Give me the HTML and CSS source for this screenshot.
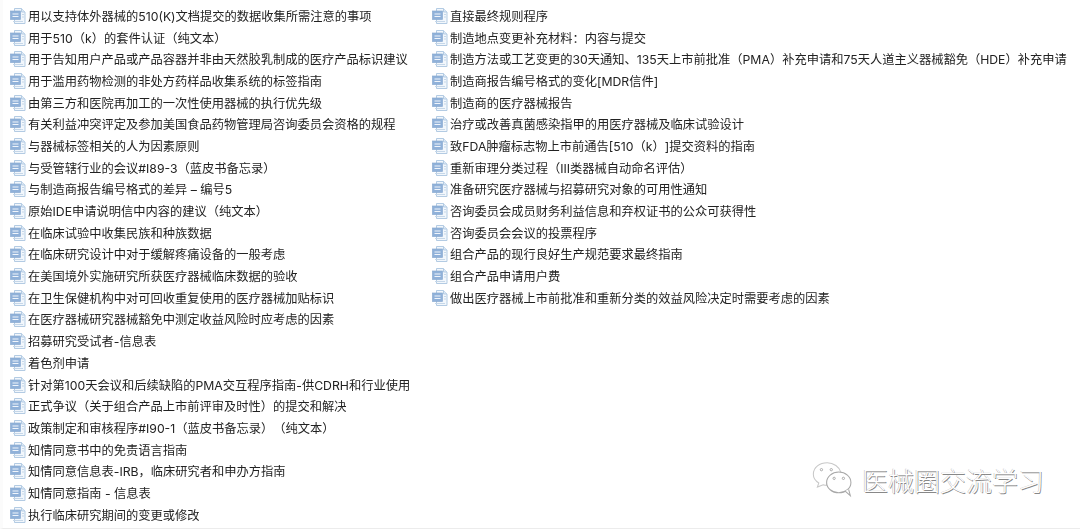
FILE: index.html
```html
<!DOCTYPE html>
<html lang="zh-CN">
<head>
<meta charset="utf-8">
<title>FDA</title>
<link rel="stylesheet" href="styles.css">
</head>
<body>
<svg class="defs" width="0" height="0" aria-hidden="true">
  <symbol id="doc" viewBox="0 0 16 16">
    <path d="M4.5 .5H11.5L15 4V15.5H4.5Z" fill="#f2f7fc" stroke="#b3cbe3"/>
    <path d="M11.5 .5V4H15" fill="#dde9f5" stroke="#b3cbe3"/>
    <rect x=".5" y="3" width="10" height="8.5" fill="#90b1d9" stroke="#8aabd2" stroke-width=".7"/>
    <path d="M2.5 6H8.5M2.5 8.5H8.5" stroke="#f0f5fb" stroke-width="1.1"/>
    <path d="M3 13.5H13M12 6.5H14M12 9H14" stroke="#c6d7e8"/>
  </symbol>
</svg>
<main class="page">
  <ul class="col col-left">
    <li class="item"><svg class="ic"><use href="#doc"/></svg><span>用以支持体外器械的510(K)文档提交的数据收集所需注意的事项</span></li>
    <li class="item"><svg class="ic"><use href="#doc"/></svg><span>用于510（k）的套件认证（纯文本）</span></li>
    <li class="item"><svg class="ic"><use href="#doc"/></svg><span>用于告知用户产品或产品容器并非由天然胶乳制成的医疗产品标识建议</span></li>
    <li class="item"><svg class="ic"><use href="#doc"/></svg><span>用于滥用药物检测的非处方药样品收集系统的标签指南</span></li>
    <li class="item"><svg class="ic"><use href="#doc"/></svg><span>由第三方和医院再加工的一次性使用器械的执行优先级</span></li>
    <li class="item"><svg class="ic"><use href="#doc"/></svg><span>有关利益冲突评定及参加美国食品药物管理局咨询委员会资格的规程</span></li>
    <li class="item"><svg class="ic"><use href="#doc"/></svg><span>与器械标签相关的人为因素原则</span></li>
    <li class="item"><svg class="ic"><use href="#doc"/></svg><span>与受管辖行业的会议#I89-3（蓝皮书备忘录）</span></li>
    <li class="item"><svg class="ic"><use href="#doc"/></svg><span>与制造商报告编号格式的差异 – 编号5</span></li>
    <li class="item"><svg class="ic"><use href="#doc"/></svg><span>原始IDE申请说明信中内容的建议（纯文本）</span></li>
    <li class="item"><svg class="ic"><use href="#doc"/></svg><span>在临床试验中收集民族和种族数据</span></li>
    <li class="item"><svg class="ic"><use href="#doc"/></svg><span>在临床研究设计中对于缓解疼痛设备的一般考虑</span></li>
    <li class="item"><svg class="ic"><use href="#doc"/></svg><span>在美国境外实施研究所获医疗器械临床数据的验收</span></li>
    <li class="item"><svg class="ic"><use href="#doc"/></svg><span>在卫生保健机构中对可回收重复使用的医疗器械加贴标识</span></li>
    <li class="item"><svg class="ic"><use href="#doc"/></svg><span>在医疗器械研究器械豁免中测定收益风险时应考虑的因素</span></li>
    <li class="item"><svg class="ic"><use href="#doc"/></svg><span>招募研究受试者-信息表</span></li>
    <li class="item"><svg class="ic"><use href="#doc"/></svg><span>着色剂申请</span></li>
    <li class="item"><svg class="ic"><use href="#doc"/></svg><span>针对第100天会议和后续缺陷的PMA交互程序指南-供CDRH和行业使用</span></li>
    <li class="item"><svg class="ic"><use href="#doc"/></svg><span>正式争议（关于组合产品上市前评审及时性）的提交和解决</span></li>
    <li class="item"><svg class="ic"><use href="#doc"/></svg><span>政策制定和审核程序#I90-1（蓝皮书备忘录）（纯文本）</span></li>
    <li class="item"><svg class="ic"><use href="#doc"/></svg><span>知情同意书中的免责语言指南</span></li>
    <li class="item"><svg class="ic"><use href="#doc"/></svg><span>知情同意信息表-IRB，临床研究者和申办方指南</span></li>
    <li class="item"><svg class="ic"><use href="#doc"/></svg><span>知情同意指南 - 信息表</span></li>
    <li class="item"><svg class="ic"><use href="#doc"/></svg><span>执行临床研究期间的变更或修改</span></li>
  </ul>
  <ul class="col col-right">
    <li class="item"><svg class="ic"><use href="#doc"/></svg><span>直接最终规则程序</span></li>
    <li class="item"><svg class="ic"><use href="#doc"/></svg><span>制造地点变更补充材料：内容与提交</span></li>
    <li class="item"><svg class="ic"><use href="#doc"/></svg><span>制造方法或工艺变更的30天通知、135天上市前批准（PMA）补充申请和75天人道主义器械豁免（HDE）补充申请</span></li>
    <li class="item"><svg class="ic"><use href="#doc"/></svg><span>制造商报告编号格式的变化[MDR信件]</span></li>
    <li class="item"><svg class="ic"><use href="#doc"/></svg><span>制造商的医疗器械报告</span></li>
    <li class="item"><svg class="ic"><use href="#doc"/></svg><span>治疗或改善真菌感染指甲的用医疗器械及临床试验设计</span></li>
    <li class="item"><svg class="ic"><use href="#doc"/></svg><span>致FDA肿瘤标志物上市前通告[510（k）]提交资料的指南</span></li>
    <li class="item"><svg class="ic"><use href="#doc"/></svg><span>重新审理分类过程（III类器械自动命名评估）</span></li>
    <li class="item"><svg class="ic"><use href="#doc"/></svg><span>准备研究医疗器械与招募研究对象的可用性通知</span></li>
    <li class="item"><svg class="ic"><use href="#doc"/></svg><span>咨询委员会成员财务利益信息和弃权证书的公众可获得性</span></li>
    <li class="item"><svg class="ic"><use href="#doc"/></svg><span>咨询委员会会议的投票程序</span></li>
    <li class="item"><svg class="ic"><use href="#doc"/></svg><span>组合产品的现行良好生产规范要求最终指南</span></li>
    <li class="item"><svg class="ic"><use href="#doc"/></svg><span>组合产品申请用户费</span></li>
    <li class="item"><svg class="ic"><use href="#doc"/></svg><span>做出医疗器械上市前批准和重新分类的效益风险决定时需要考虑的因素</span></li>
  </ul>
  <div class="mark">
    <svg class="wechat" viewBox="0 0 36 32" aria-hidden="true">
      <path d="M13 1.5C6.5 1.5 1 5.5 1 11.5C1 14.8 3 17.4 5.7 19L4.5 22.5L9.5 20.5C10.5 20.8 11.5 21 12.5 21C12 14 17 10 25 10C23.5 5 18.5 1.5 13 1.5Z" fill="#fff" stroke="#c8c8c8" stroke-width=".9"/>
      <ellipse cx="23" cy="18.5" rx="10.5" ry="9" fill="#fff" stroke="#a8a8a8" stroke-width=".9"/>
      <path d="M28.5 26L33 30L31.5 24.5" fill="#fff" stroke="#a8a8a8" stroke-width=".9"/>
      <circle cx="8" cy="7.5" r="1" fill="none" stroke="#a5a5a5" stroke-width=".8"/><circle cx="16.5" cy="7.5" r="1" fill="none" stroke="#a5a5a5" stroke-width=".8"/>
      <circle cx="19" cy="15" r="1" fill="none" stroke="#a5a5a5" stroke-width=".8"/><circle cx="27" cy="15" r="1" fill="none" stroke="#a5a5a5" stroke-width=".8"/>
    </svg>
    <span class="mark-text">医械圈交流学习</span>
  </div>
</main>
</body>
</html>
```
FILE: styles.css
```css
* { box-sizing: border-box; }
html, body { margin: 0; padding: 0; background: #fff; }
.defs { position: absolute; }
.page {
  position: relative;
  width: 1080px;
  height: 529px;
  overflow: hidden;
  display: flex;
  padding: 5px 0 0 7px;
  border-left: 3px solid #fbfbfb;
  border-bottom: 1px solid #ececec;
  font-family: Inter, "Noto Sans CJK SC", sans-serif;
  font-size: 12.25px;
  color: #222;
  text-spacing-trim: space-all;
}
.page::after {
  content: "";
  position: absolute;
  left: 939px;
  bottom: -1px;
  width: 78px;
  height: 1px;
  background: #d8d8d8;
}
.col { list-style: none; margin: 0; padding: 0; display: flex; flex-direction: column; flex: none; }
.col-left { width: 422px; }
.item { height: 21.7px; display: flex; align-items: center; gap: 2px; white-space: nowrap; filter: blur(.3px); }
.ic { width: 16px; height: 16px; flex: none; }
.mark {
  position: absolute;
  left: 809px;
  top: 461px;
  display: flex;
  align-items: center;
  gap: 8px;
}
.wechat { width: 42px; height: 37px; }
.mark-text {
  font-family: "Noto Sans CJK SC", sans-serif;
  font-size: 26px;
  font-weight: 300;
  line-height: 1;
  color: #fff;
  text-shadow: .7px .7px .4px #888, -.4px -.4px .4px #bbb;
}
```
